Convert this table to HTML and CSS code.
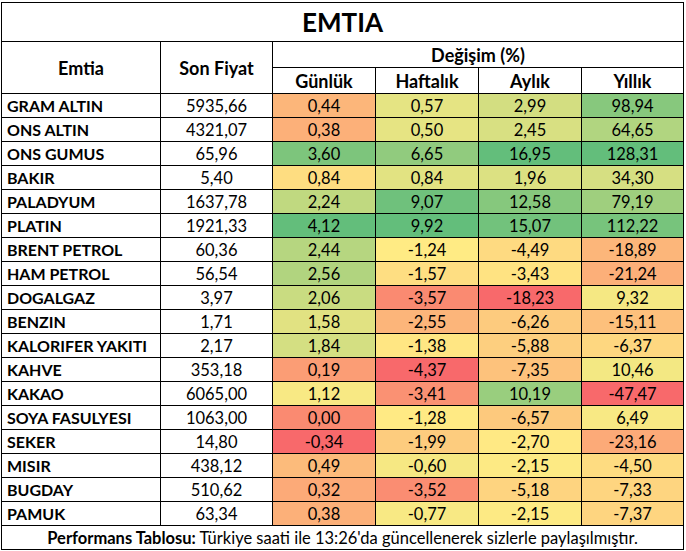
FILE: index.html
```html
<!DOCTYPE html>
<html lang="tr">
<head>
<meta charset="utf-8">
<title>EMTIA</title>
<link rel="stylesheet" href="styles.css">
</head>
<body>
<table class="perf">
  <colgroup>
    <col class="c-name"><col class="c-price"><col class="c-chg"><col class="c-chg"><col class="c-chg"><col class="c-last">
  </colgroup>
  <thead>
    <tr class="r-title"><th colspan="6">EMTIA</th></tr>
    <tr class="r-head">
      <th rowspan="2">Emtia</th>
      <th rowspan="2">Son Fiyat</th>
      <th colspan="4">Değişim (%)</th>
    </tr>
    <tr class="r-head">
      <th>Günlük</th><th>Haftalık</th><th>Aylık</th><th>Yıllık</th>
    </tr>
  </thead>
  <tbody>
    <tr><td class="name">GRAM ALTIN</td><td>5935,66</td><td class="v">0,44</td><td class="v">0,57</td><td class="v">2,99</td><td class="v">98,94</td></tr>
    <tr><td class="name">ONS ALTIN</td><td>4321,07</td><td class="v">0,38</td><td class="v">0,50</td><td class="v">2,45</td><td class="v">64,65</td></tr>
    <tr><td class="name">ONS GUMUS</td><td>65,96</td><td class="v">3,60</td><td class="v">6,65</td><td class="v">16,95</td><td class="v">128,31</td></tr>
    <tr><td class="name">BAKIR</td><td>5,40</td><td class="v">0,84</td><td class="v">0,84</td><td class="v">1,96</td><td class="v">34,30</td></tr>
    <tr><td class="name">PALADYUM</td><td>1637,78</td><td class="v">2,24</td><td class="v">9,07</td><td class="v">12,58</td><td class="v">79,19</td></tr>
    <tr><td class="name">PLATIN</td><td>1921,33</td><td class="v">4,12</td><td class="v">9,92</td><td class="v">15,07</td><td class="v">112,22</td></tr>
    <tr><td class="name">BRENT PETROL</td><td>60,36</td><td class="v">2,44</td><td class="v">-1,24</td><td class="v">-4,49</td><td class="v">-18,89</td></tr>
    <tr><td class="name">HAM PETROL</td><td>56,54</td><td class="v">2,56</td><td class="v">-1,57</td><td class="v">-3,43</td><td class="v">-21,24</td></tr>
    <tr><td class="name">DOGALGAZ</td><td>3,97</td><td class="v">2,06</td><td class="v">-3,57</td><td class="v">-18,23</td><td class="v">9,32</td></tr>
    <tr><td class="name">BENZIN</td><td>1,71</td><td class="v">1,58</td><td class="v">-2,55</td><td class="v">-6,26</td><td class="v">-15,11</td></tr>
    <tr><td class="name">KALORIFER YAKITI</td><td>2,17</td><td class="v">1,84</td><td class="v">-1,38</td><td class="v">-5,88</td><td class="v">-6,37</td></tr>
    <tr><td class="name">KAHVE</td><td>353,18</td><td class="v">0,19</td><td class="v">-4,37</td><td class="v">-7,35</td><td class="v">10,46</td></tr>
    <tr><td class="name">KAKAO</td><td>6065,00</td><td class="v">1,12</td><td class="v">-3,41</td><td class="v">10,19</td><td class="v">-47,47</td></tr>
    <tr><td class="name">SOYA FASULYESI</td><td>1063,00</td><td class="v">0,00</td><td class="v">-1,28</td><td class="v">-6,57</td><td class="v">6,49</td></tr>
    <tr><td class="name">SEKER</td><td>14,80</td><td class="v">-0,34</td><td class="v">-1,99</td><td class="v">-2,70</td><td class="v">-23,16</td></tr>
    <tr><td class="name">MISIR</td><td>438,12</td><td class="v">0,49</td><td class="v">-0,60</td><td class="v">-2,15</td><td class="v">-4,50</td></tr>
    <tr><td class="name">BUGDAY</td><td>510,62</td><td class="v">0,32</td><td class="v">-3,52</td><td class="v">-5,18</td><td class="v">-7,33</td></tr>
    <tr><td class="name">PAMUK</td><td>63,34</td><td class="v">0,38</td><td class="v">-0,77</td><td class="v">-2,15</td><td class="v">-7,37</td></tr>
  </tbody>
  <tfoot>
    <tr class="r-foot"><td colspan="6"><b>Performans Tablosu:</b> Türkiye saati ile 13:26'da güncellenerek sizlerle paylaşılmıştır.</td></tr>
  </tfoot>
</table>
<script src="script.js"></script>
</body>
</html>
```

FILE: styles.css
```css
html, body {
  margin: 0;
  background: #ffffff;
}
body {
  padding: 2px 0 0 1px;
  font-family: "Lato", "Open Sans", "Liberation Sans", sans-serif;
  color: #000;
}
.perf {
  border-collapse: collapse;
  table-layout: fixed;
  width: 682px;
  font-size: 16.5px;
}
.perf th, .perf td {
  border: 1px solid #000;
  padding: 0;
  text-align: center;
  white-space: nowrap;
  overflow: hidden;
}
.c-name { width: 159px; }
.c-price { width: 112px; }
.c-chg { width: 103px; }
.c-last { width: 102px; }
.r-title th {
  height: 38px;
  font-size: 26px;
  font-weight: 700;
}
.r-head th {
  height: 25px;
  font-size: 18px;
  font-weight: 700;
}
.perf tbody td {
  height: 23px;
  line-height: 18px;
}
.perf td.name {
  text-align: left;
  padding-left: 5px;
  font-weight: 700;
  font-size: 16px;
}
.r-foot td {
  height: 23px;
  font-size: 16.5px;
}
```

FILE: script.js
```js
(function () {
  var red = [248, 105, 107], yel = [255, 235, 132], grn = [99, 190, 123];
  function mix(a, b, t) {
    return [0, 1, 2].map(function (i) { return Math.round(a[i] + (b[i] - a[i]) * t); });
  }
  var rows = document.querySelectorAll('.perf tbody tr');
  for (var c = 2; c < 6; c++) {
    var cells = [], vals = [];
    rows.forEach(function (r) {
      var td = r.children[c];
      cells.push(td);
      vals.push(parseFloat(td.textContent.replace(',', '.')));
    });
    var s = vals.slice().sort(function (a, b) { return a - b; });
    var n = s.length, min = s[0], max = s[n - 1];
    var pos = (n - 1) * 0.5, lo = Math.floor(pos);
    var mid = s[lo] + (s[Math.ceil(pos)] - s[lo]) * (pos - lo);
    cells.forEach(function (td, i) {
      var v = vals[i], col;
      if (v <= mid) col = mix(red, yel, mid === min ? 1 : (v - min) / (mid - min));
      else col = mix(yel, grn, max === mid ? 1 : (v - mid) / (max - mid));
      td.style.backgroundColor = 'rgb(' + col.join(',') + ')';
    });
  }
})();
```
